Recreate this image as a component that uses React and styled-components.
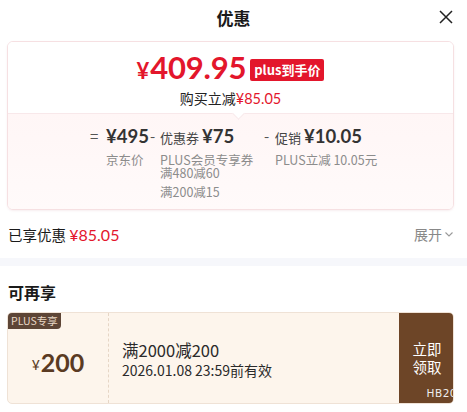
import React from 'react';
import styled, { createGlobalStyle } from 'styled-components';

const RED = '#e3162c';

const Global = createGlobalStyle`
  html, body {
    margin: 0;
    padding: 0;
    background: #fff;
    overflow: hidden;
  }
  body {
    font-family: "Noto Sans CJK SC", "Noto Sans", sans-serif;
    color: #1a1a1a;
  }
`;

const Page = styled.div`
  width: 467px;
  height: 412px;
  background: #fff;
  overflow: hidden;
`;

const Header = styled.div`
  position: relative;
  height: 34px;
  display: flex;
  align-items: center;
  justify-content: center;
`;

const Title = styled.div`
  font-size: 17px;
  font-weight: 700;
  color: #1a1a1a;
`;

const Close = styled.div`
  position: absolute;
  right: 13px;
  top: 9px;
  width: 16px;
  height: 16px;
  display: flex;
`;

const Section = styled.div`
  margin-left: 7px;
  width: 447px;
`;

const Card = styled.div`
  margin-top: 7px;
  border: 1px solid #f6e0e2;
  border-radius: 6px;
  overflow: hidden;
  box-shadow: 0 1px 2px rgba(230, 200, 205, 0.3);
`;

const Top = styled.div`
  height: 71px;
  background: #fff;
  display: flex;
  flex-direction: column;
  align-items: center;
  justify-content: center;
  position: relative;
  border-bottom: 1px solid #f8e8ea;

  &::after {
    content: '';
    position: absolute;
    left: 226px;
    bottom: -5px;
    width: 8px;
    height: 8px;
    background: #fff;
    border-right: 1px solid #f8e8ea;
    border-bottom: 1px solid #f8e8ea;
    transform: rotate(45deg);
  }
`;

const PriceLine = styled.div`
  display: flex;
  align-items: center;
  margin-top: 2px;
`;

const BigPrice = styled.div`
  font-family: Lato, "Noto Sans", sans-serif;
  font-weight: 700;
  color: ${RED};
  font-size: 31px;
  line-height: 34px;
  letter-spacing: -0.2px;

  span {
    font-size: 22px;
    margin-right: 1px;
  }
`;

const Badge = styled.div`
  margin-left: 4px;
  margin-top: 2px;
  background: ${RED};
  color: #fff;
  font-size: 13px;
  font-weight: 700;
  height: 22px;
  line-height: 22px;
  padding: 0 4px;
  border-radius: 2px;
`;

const SubLine = styled.div`
  font-size: 14px;
  color: #222;
  line-height: 18px;
  margin-top: 1px;

  em {
    font-style: normal;
    color: ${RED};
    font-family: Lato, "Noto Sans", sans-serif;
    font-size: 14.5px;
  }
`;

const Bottom = styled.div`
  background: linear-gradient(#fff6f6, #fffafa);
  height: 95px;
  display: flex;
  padding-top: 10px;
  box-sizing: border-box;
  padding-left: 82px;
`;

const Col = styled.div`
  display: flex;
  width: ${p => p.w}px;
`;

const Sign = styled.div`
  width: ${p => p.w || 10}px;
  font-size: 15px;
  color: #555;
  line-height: 24px;
`;

const ColBody = styled.div`
  display: flex;
  flex-direction: column;
`;

const Amount = styled.div`
  line-height: 24px;
  font-size: 13px;
  color: #444;
  white-space: nowrap;
  margin-bottom: 3px;

  b {
    font-family: Lato, "Noto Sans", sans-serif;
    font-size: 18.5px;
    font-weight: 700;
    color: #333;
  }
`;

const Label = styled.div`
  font-size: 12.5px;
  line-height: 13px;
  color: #8c8c8c;
  width: ${p => (p.w ? `${p.w}px` : 'auto')};
  margin-top: ${p => p.mt || 0}px;
  white-space: ${p => (p.w ? 'normal' : 'nowrap')};
`;

const SavedRow = styled.div`
  height: 48px;
  display: flex;
  align-items: center;
  justify-content: space-between;
  padding-left: 1px;
`;

const Saved = styled.div`
  font-size: 14.5px;
  color: #1a1a1a;

  em {
    font-style: normal;
    color: ${RED};
    font-family: Lato, "Noto Sans", sans-serif;
    font-size: 16px;
  }
`;

const Expand = styled.div`
  display: flex;
  align-items: center;
  gap: 2px;
  font-size: 14px;
  color: #888;
`;

const Band = styled.div`
  height: 8px;
  background: #f6f7fb;
`;

const Heading = styled.div`
  font-size: 16px;
  font-weight: 700;
  color: #1a1a1a;
  margin: 15px 0 0 8px;
  line-height: 22px;
`;

const Coupon = styled.div`
  margin-top: 9px;
  height: 90px;
  display: flex;
  background: #fdf5ec;
  border: 1px solid #efe2d6;
  border-radius: 5px;
  overflow: hidden;
  position: relative;
`;

const Tag = styled.div`
  position: absolute;
  left: 0;
  top: 0;
  background: #5d4536;
  color: #e9d8c6;
  font-size: 10.5px;
  line-height: 16px;
  height: 16px;
  padding: 0 3px;
  border-bottom-right-radius: 4px;
`;

const Value = styled.div`
  width: 100px;
  border-right: 1px dashed #e6d6c6;
  display: flex;
  align-items: center;
  justify-content: center;
  padding-top: 7px;
  color: #5a3a22;
  font-family: Lato, "Noto Sans", sans-serif;

  span {
    font-size: 14px;
    margin-right: 1px;
    margin-top: 6px;
  }
  b {
    font-size: 25px;
    font-weight: 700;
  }
`;

const Info = styled.div`
  flex: 1;
  padding-left: 13px;
  display: flex;
  flex-direction: column;
  justify-content: center;
  padding-top: 4px;
`;

const Rule = styled.div`
  font-size: 16.5px;
  line-height: 20px;
  color: #2a2a2a;
`;

const Expire = styled.div`
  font-size: 14px;
  line-height: 20px;
  color: #2a2a2a;
`;

const Grab = styled.div`
  width: 52px;
  background: #6d4527;
  color: #fff;
  display: flex;
  flex-direction: column;
  align-items: center;
  justify-content: center;
  font-size: 14.5px;
  line-height: 18px;
  position: relative;
  padding-left: 2px;
`;

const Code = styled.div`
  position: absolute;
  right: -4px;
  bottom: 1px;
  font-size: 10.5px;
  letter-spacing: 0.5px;
  color: #eee;
  font-family: "DejaVu Sans", sans-serif;
`;

export default function App() {
  return (
    <Page>
      <Global />
      <Header>
        <Title>优惠</Title>
        <Close>
          <svg width="16" height="16" viewBox="0 0 16 16">
            <path d="M2 2 L14 14 M14 2 L2 14" stroke="#222" strokeWidth="1.5" fill="none" />
          </svg>
        </Close>
      </Header>
      <Section>
        <Card>
          <Top>
            <PriceLine>
              <BigPrice><span>¥</span>409.95</BigPrice>
              <Badge>plus到手价</Badge>
            </PriceLine>
            <SubLine>购买立减<em>¥85.05</em></SubLine>
          </Top>
          <Bottom>
            <Col w={60}>
              <Sign w={16}>=</Sign>
              <ColBody>
                <Amount><b>¥495</b></Amount>
                <Label>京东价</Label>
              </ColBody>
            </Col>
            <Col w={114}>
              <Sign>-</Sign>
              <ColBody>
                <Amount>优惠券 <b>¥75</b></Amount>
                <Label w={95}>PLUS会员专享券 满480减60</Label>
                <Label mt={6}>满200减15</Label>
              </ColBody>
            </Col>
            <Col w={120}>
              <Sign w={11}>-</Sign>
              <ColBody>
                <Amount>促销 <b>¥10.05</b></Amount>
                <Label>PLUS立减 10.05元</Label>
              </ColBody>
            </Col>
          </Bottom>
        </Card>
        <SavedRow>
          <Saved>已享优惠 <em>¥85.05</em></Saved>
          <Expand>
            展开
            <svg width="10" height="10" viewBox="0 0 10 10">
              <path d="M1.5 3.5 L5 7 L8.5 3.5" stroke="#999" strokeWidth="1.1" fill="none" />
            </svg>
          </Expand>
        </SavedRow>
      </Section>
      <Band />
      <Heading>可再享</Heading>
      <Section>
        <Coupon>
          <Tag>PLUS专享</Tag>
          <Value><span>¥</span><b>200</b></Value>
          <Info>
            <Rule>满2000减200</Rule>
            <Expire>2026.01.08 23:59前有效</Expire>
          </Info>
          <Grab>
            <div>立即</div>
            <div>领取</div>
            <Code>HB20</Code>
          </Grab>
        </Coupon>
      </Section>
    </Page>
  );
}
